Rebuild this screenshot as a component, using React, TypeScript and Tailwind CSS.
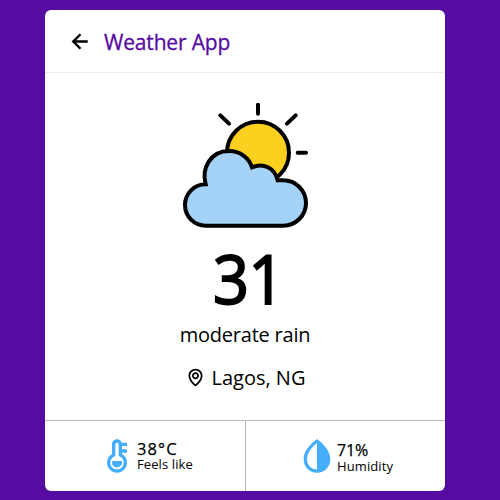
import React from "react";
import { BiLeftArrowAlt, BiMap, BiSolidThermometer, BiSolidDropletHalf } from "react-icons/bi";

function CloudSun() {
  return (
    <svg className="block h-[125px] w-[125px]" viewBox="39 39 375 375" fill="none" stroke="#000" strokeWidth="12" strokeLinecap="round">
      <path d="M264 44V71M151 76L177 101M377 76L351 101M383 188H408" />
      <circle cx="264" cy="188" r="93" fill="#fdd01f" />
      <path
        d="M107 407A62 62 0 0 1 107 283C94 235 121 183 177 183C210 183 237 203 246 232C280 217 314 233 323 271Q331 270 340 271A68 68 0 0 1 340 407Z"
        fill="#a4d3f7"
      />
    </svg>
  );
}

export default function App() {
  return (
    <div className="flex h-[500px] w-[500px] bg-[#560ba1] pl-[45px] pt-[10px] font-['Open_Sans','Noto_Sans',sans-serif] text-black">
      <main className="flex h-[481px] w-[400px] flex-col rounded-[6px] bg-white">
        <header className="flex h-[63px] items-center border-b border-[#ececec] pl-[21px]">
          <BiLeftArrowAlt className="h-[29px] w-[29px]" />
          <h1 className="ml-[9px] mt-[2px] text-[21px] leading-[30px] tracking-[-0.17px] text-[#560ba1] [-webkit-text-stroke:0.3px]">Weather App</h1>
        </header>
        <section className="flex h-[347px] flex-col items-center pt-[30px]">
          <CloudSun />
          <div className="mt-[14px] h-[72px] scale-x-[0.94] pl-[7px] text-[67px] leading-[72px] tracking-[-0.5px] [-webkit-text-stroke:2px]">31</div>
          <div className="mt-[7px] h-[28px] text-[20px] leading-[28px] tracking-[-0.22px]">moderate rain</div>
          <div className="mt-[15px] flex h-[28px] items-center text-[20px] leading-[28px]">
            <BiMap className="mr-[6px] h-[21px] w-[21px] -translate-y-px" />
            <span>Lagos, NG</span>
          </div>
        </section>
        <footer className="flex h-[71px] border-t border-[#b8b8b8]">
          <div className="flex w-[201px] items-center border-r border-[#b8b8b8] pl-[52px]">
            <BiSolidThermometer className="h-[40px] w-[40px] text-[#44aefc]" />
            <div className="-mt-[2px] flex flex-col">
              <span className="text-[16.5px] leading-[17px] tracking-[1.1px] [-webkit-text-stroke:0.25px]">38°C</span>
              <span className="text-[13px] leading-[14px] tracking-[0.1px]">Feels like</span>
            </div>
          </div>
          <div className="flex items-center pl-[51px]">
            <BiSolidDropletHalf className="h-[40px] w-[40px] text-[#44aefc]" />
            <div className="mt-[3px] flex flex-col">
              <span className="text-[16px] leading-[17px] tracking-[-0.2px] [-webkit-text-stroke:0.25px]">71%</span>
              <span className="text-[13px] leading-[14px] tracking-[0.1px]">Humidity</span>
            </div>
          </div>
        </footer>
      </main>
    </div>
  );
}
